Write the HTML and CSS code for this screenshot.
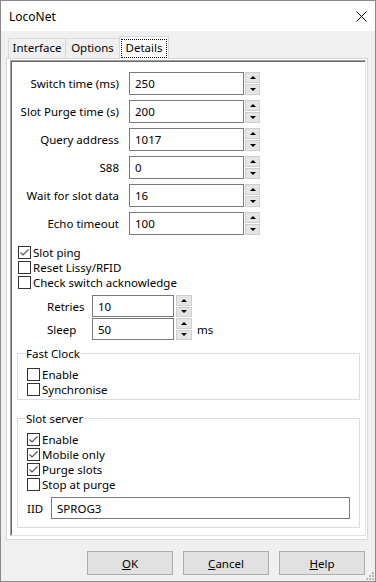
FILE: index.html
```html
<!DOCTYPE html>
<html lang="en">
<head>
    <meta charset="UTF-8">
    <meta name="viewport" content="width=device-width, initial-scale=1.0">
    <title>LocoNet</title>
    <link rel="stylesheet" href="styles.css">
</head>
<body>
    <div class="window">
        <div class="titlebar">
            <span class="title">LocoNet</span>
            <svg class="close" width="11" height="11" viewBox="0 0 11 11">
                <path d="M0.5 0.5 L10.5 10.5 M10.5 0.5 L0.5 10.5" stroke="#000" stroke-width="1" fill="none"/>
            </svg>
        </div>

        <div class="body">
            <div class="tabs">
                <div class="tab tab-first">Interface</div>
                <div class="tab tab-mid">Options</div>
                <div class="tab tab-active"><span class="focus">Details</span></div>
            </div>

            <div class="panel">
                <div class="frame">
                    <div class="fields">
                        <div class="field">
                            <span class="field-label">Switch time (ms)</span>
                            <div class="textbox">250</div>
                            <div class="spin"><span class="spin-btn"><i class="up"></i></span><span class="spin-btn"><i class="down"></i></span></div>
                        </div>
                        <div class="field">
                            <span class="field-label">Slot Purge time (s)</span>
                            <div class="textbox">200</div>
                            <div class="spin"><span class="spin-btn"><i class="up"></i></span><span class="spin-btn"><i class="down"></i></span></div>
                        </div>
                        <div class="field">
                            <span class="field-label">Query address</span>
                            <div class="textbox">1017</div>
                            <div class="spin"><span class="spin-btn"><i class="up"></i></span><span class="spin-btn"><i class="down"></i></span></div>
                        </div>
                        <div class="field">
                            <span class="field-label">S88</span>
                            <div class="textbox">0</div>
                            <div class="spin"><span class="spin-btn"><i class="up"></i></span><span class="spin-btn"><i class="down"></i></span></div>
                        </div>
                        <div class="field">
                            <span class="field-label">Wait for slot data</span>
                            <div class="textbox">16</div>
                            <div class="spin"><span class="spin-btn"><i class="up"></i></span><span class="spin-btn"><i class="down"></i></span></div>
                        </div>
                        <div class="field">
                            <span class="field-label">Echo timeout</span>
                            <div class="textbox">100</div>
                            <div class="spin"><span class="spin-btn"><i class="up"></i></span><span class="spin-btn"><i class="down"></i></span></div>
                        </div>
                    </div>

                    <div class="checks">
                        <div class="check"><span class="box"><svg width="11" height="11" viewBox="0 0 11 11"><polyline points="1.5,5.5 4,8 9.5,2.5" fill="none" stroke="#555" stroke-width="1.2"/></svg></span>Slot ping</div>
                        <div class="check"><span class="box"></span>Reset Lissy/RFID</div>
                        <div class="check"><span class="box"></span>Check switch acknowledge</div>
                    </div>

                    <div class="retry">
                        <div class="retry-row">
                            <span class="retry-label">Retries</span>
                            <div class="textbox small">10</div>
                            <div class="spin small-spin"><span class="spin-btn"><i class="up"></i></span><span class="spin-btn"><i class="down"></i></span></div>
                        </div>
                        <div class="retry-row">
                            <span class="retry-label">Sleep</span>
                            <div class="textbox small">50</div>
                            <div class="spin small-spin"><span class="spin-btn"><i class="up"></i></span><span class="spin-btn"><i class="down"></i></span></div>
                            <span class="unit">ms</span>
                        </div>
                    </div>

                    <fieldset class="group">
                        <legend>Fast Clock</legend>
                        <div class="check"><span class="box"></span>Enable</div>
                        <div class="check"><span class="box"></span>Synchronise</div>
                    </fieldset>

                    <fieldset class="group group-slot">
                        <legend>Slot server</legend>
                        <div class="check"><span class="box"><svg width="11" height="11" viewBox="0 0 11 11"><polyline points="1.5,5.5 4,8 9.5,2.5" fill="none" stroke="#555" stroke-width="1.2"/></svg></span>Enable</div>
                        <div class="check"><span class="box"><svg width="11" height="11" viewBox="0 0 11 11"><polyline points="1.5,5.5 4,8 9.5,2.5" fill="none" stroke="#555" stroke-width="1.2"/></svg></span>Mobile only</div>
                        <div class="check"><span class="box"><svg width="11" height="11" viewBox="0 0 11 11"><polyline points="1.5,5.5 4,8 9.5,2.5" fill="none" stroke="#555" stroke-width="1.2"/></svg></span>Purge slots</div>
                        <div class="check"><span class="box"></span>Stop at purge</div>
                        <div class="iid-row">
                            <span class="iid-label">IID</span>
                            <div class="textbox wide">SPROG3</div>
                        </div>
                    </fieldset>
                </div>
            </div>

            <div class="buttons">
                <div class="button"><u>O</u>K</div>
                <div class="button"><u>C</u>ancel</div>
                <div class="button"><u>H</u>elp</div>
            </div>
        </div>

        <!-- resize grip in the corner -->
        <svg class="grip" width="10" height="10" viewBox="0 0 10 10">
            <rect x="7" y="1" width="2" height="2" fill="#b8b8b8"/>
            <rect x="4" y="4" width="2" height="2" fill="#b8b8b8"/>
            <rect x="7" y="4" width="2" height="2" fill="#b8b8b8"/>
            <rect x="1" y="7" width="2" height="2" fill="#b8b8b8"/>
            <rect x="4" y="7" width="2" height="2" fill="#b8b8b8"/>
            <rect x="7" y="7" width="2" height="2" fill="#b8b8b8"/>
        </svg>
    </div>
</body>
</html>
```

FILE: styles.css
```css
* {
    box-sizing: border-box;
}

body {
    margin: 0;
    font-family: 'Noto Sans', sans-serif;
    font-size: 11.5px;
    color: #000;
    background: #f0f0f0;
}

.window {
    position: relative;
    width: 376px;
    height: 582px;
    border: 1px solid #8a8a8a;
    background: #f0f0f0;
    display: flex;
    flex-direction: column;
}

.titlebar {
    height: 30px;
    background: #fff;
    display: flex;
    align-items: center;
    justify-content: space-between;
    padding: 0 8px;
}

.title {
    font-size: 12px;
}

.body {
    flex: 1;
    display: flex;
    flex-direction: column;
    padding: 5px 7px 6px 5px;
}

/* tabs */
.tabs {
    display: flex;
    align-items: flex-end;
    height: 22px;
    padding-left: 2px;
}

.tab {
    height: 20px;
    line-height: 18px;
    text-align: center;
    border: 1px solid #d9d9d9;
    border-bottom: none;
    background: #f0f0f0;
}

.tab-first {
    width: 58px;
}

.tab-mid {
    width: 54px;
    border-left: none;
}

.tab-active {
    position: relative;
    z-index: 1;
    width: 50px;
    height: 23px;
    margin-left: -1px;
    margin-bottom: -1px;
    background: #fff;
    padding-top: 2px;
    line-height: 17px;
}

.focus {
    display: block;
    margin: 0 1px;
    height: 19px;
    border: 1px dotted #000;
    line-height: 15px;
}

.panel {
    flex: 1;
    display: flex;
    flex-direction: column;
    border: 1px solid #d9d9d9;
    background: #fff;
    padding: 1px 1px 3px 3px;
}

.frame {
    flex: 1;
    border-top: 1px solid #a0a0a0;
    border-left: 1px solid #a0a0a0;
    border-right: 1px solid #e3e3e3;
    border-bottom: 1px solid #e3e3e3;
    box-shadow: inset 1px 1px 0 #696969;
    padding-top: 11px;
}

/* number rows */
.fields {
    display: flex;
    flex-direction: column;
    gap: 5px;
}

.field {
    display: flex;
    align-items: center;
    height: 23px;
}

.field-label {
    width: 108px;
    margin-right: 10px;
    text-align: right;
}

.textbox {
    width: 115px;
    height: 23px;
    border: 1px solid #7a7a7a;
    background: #fff;
    padding-left: 5px;
    display: flex;
    align-items: center;
}

.spin {
    width: 15px;
    height: 23px;
    margin-left: 1px;
    display: flex;
    flex-direction: column;
    gap: 1px;
}

.spin-btn {
    flex: 1;
    background: #e5e5e5;
    border: 1px solid #cfcfcf;
    display: flex;
    align-items: center;
    justify-content: center;
}

.up {
    border-left: 3px solid transparent;
    border-right: 3px solid transparent;
    border-bottom: 3px solid #000;
}

.down {
    border-left: 3px solid transparent;
    border-right: 3px solid transparent;
    border-top: 3px solid #000;
}

/* check boxes */
.checks {
    margin: 10px 0 0 7px;
}

.check {
    display: flex;
    align-items: center;
    height: 15px;
}

.box {
    width: 13px;
    height: 13px;
    margin-right: 2px;
    border: 1px solid #333;
    background: #fff;
    display: flex;
}

/* retries / sleep */
.retry {
    margin-top: 5px;
    display: flex;
    flex-direction: column;
    gap: 1px;
}

.retry-row {
    display: flex;
    align-items: center;
    height: 22px;
    padding-left: 36px;
}

.retry-label {
    width: 45px;
}

.textbox.small {
    width: 82px;
    height: 22px;
}

.small-spin {
    width: 16px;
    height: 22px;
    margin-left: 2px;
}

.unit {
    margin-left: 5px;
}

/* group boxes */
.group {
    margin: 6px 5px 0 6px;
    padding: 6px 9px 2px 9px;
    border: 1px solid #dcdcdc;
}

.group legend {
    margin-left: -2px;
    padding: 0 1px;
    line-height: 15px;
}

.group-slot {
    margin-top: 11px;
    padding-bottom: 8px;
}

.iid-row {
    display: flex;
    align-items: center;
    margin-top: 5px;
}

.iid-label {
    width: 24px;
}

.textbox.wide {
    flex: 1;
    height: 22px;
}

/* dialog buttons */
.buttons {
    display: flex;
    justify-content: flex-end;
    gap: 10px;
    margin: 11px 3px 0 0;
}

.button {
    width: 86px;
    height: 24px;
    border: 1px solid #adadad;
    background: #e1e1e1;
    display: flex;
    align-items: center;
    justify-content: center;
}

.grip {
    position: absolute;
    right: 0;
    bottom: 0;
}
```
